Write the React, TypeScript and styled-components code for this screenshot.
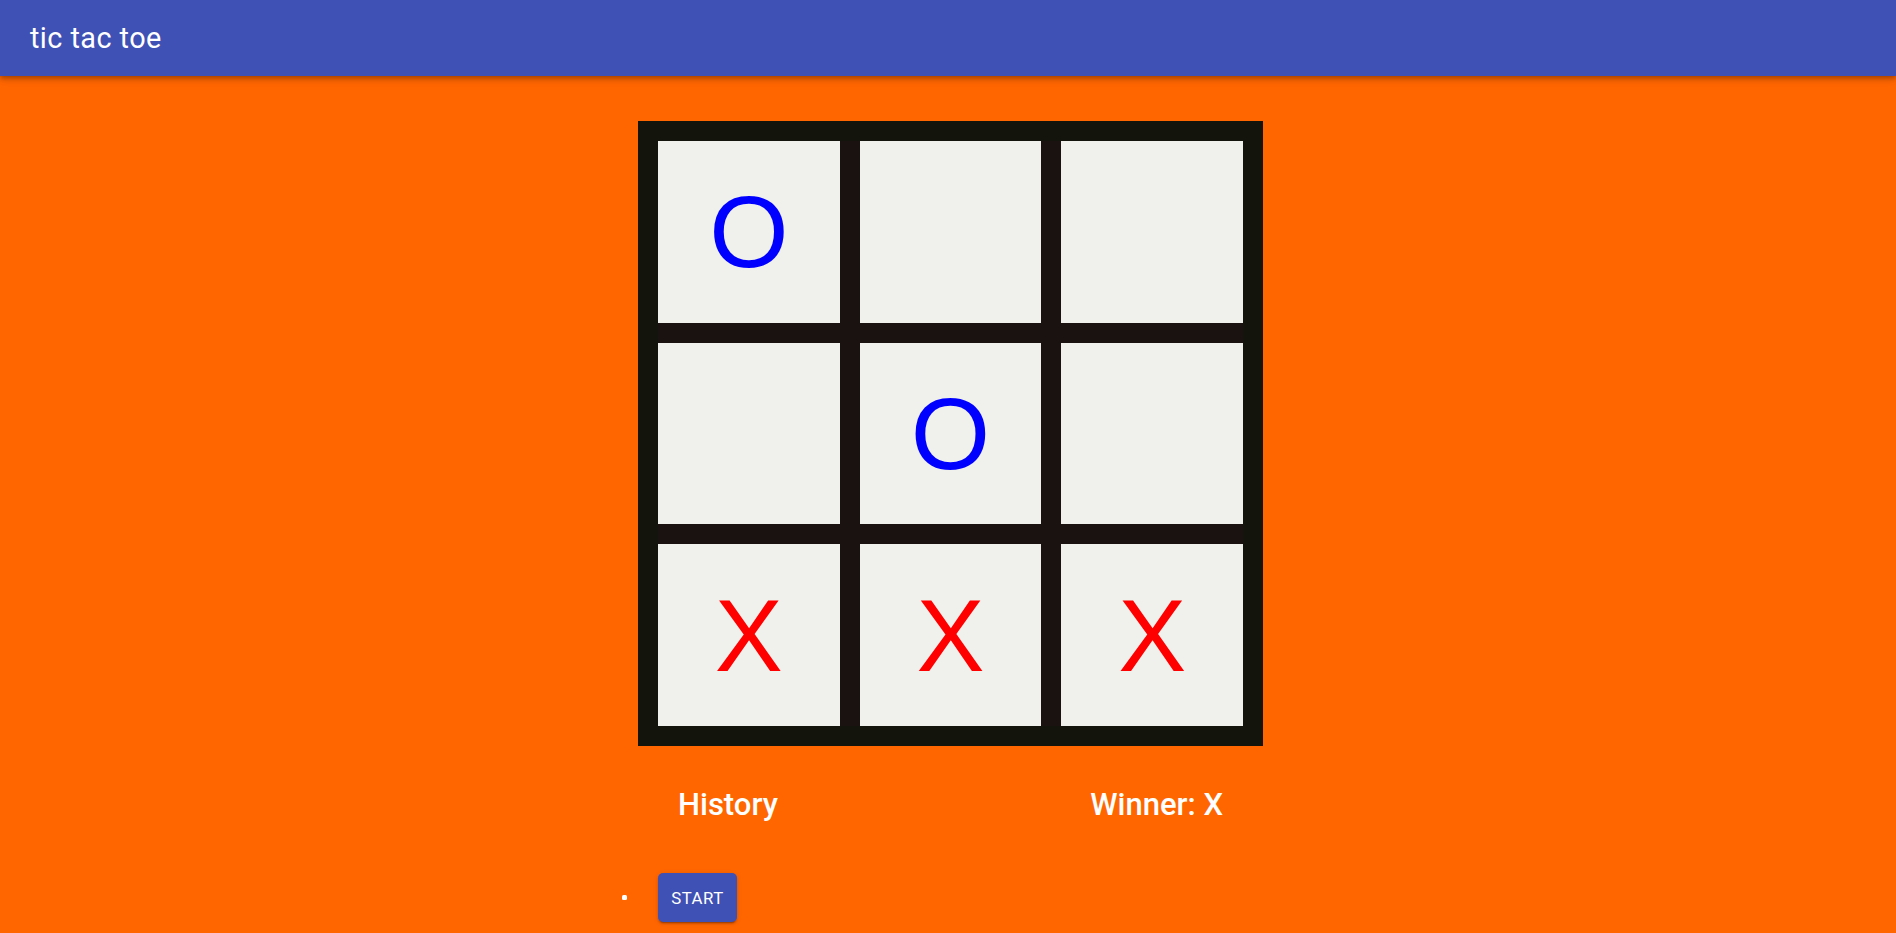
import React from "react";
import styled, { createGlobalStyle } from "styled-components";

const GlobalStyle = createGlobalStyle`
  html, body {
    margin: 0;
    padding: 0;
    background: #ff6600;
    font-family: Roboto, "Noto Sans", sans-serif;
    overflow: hidden;
  }
  * { box-sizing: border-box; }
`;

const Page = styled.div`
  min-height: 933px;
  background: #ff6600;
  display: flex;
  flex-direction: column;
`;

const AppBar = styled.header`
  height: 76px;
  background: #3f51b5;
  display: flex;
  align-items: center;
  padding-left: 30px;
  box-shadow: 0px 2px 4px -1px rgba(0, 0, 0, 0.2),
    0px 4px 5px 0px rgba(0, 0, 0, 0.14), 0px 1px 10px 0px rgba(0, 0, 0, 0.12);
  position: relative;
  z-index: 1;
`;

const Title = styled.h1`
  margin: 0;
  color: #ffffff;
  font-family: Roboto, sans-serif;
  font-size: 28.8px;
  font-weight: 400;
  letter-spacing: 0.45px;
  line-height: 1.6;
`;

const Main = styled.main`
  display: flex;
  flex-direction: column;
  align-items: flex-start;
  padding-left: 638px;
  padding-top: 45px;
`;

const Board = styled.div`
  width: 625px;
  height: 625px;
  border: 20px solid #13140c;
  background: #1a1210;
  display: grid;
  grid-template-columns: repeat(3, 1fr);
  grid-template-rows: repeat(3, 1fr);
  gap: 20px;
`;

const Cell = styled.div<{ $mark: string }>`
  background: #f0f1ed;
  display: flex;
  align-items: center;
  justify-content: center;
  font-family: "Liberation Sans", Arial, sans-serif;
  font-size: 102px;
  line-height: 1;
  color: ${(p) => (p.$mark === "X" ? "#ff0000" : "#0000ff")};
  padding-top: 1px;
`;

const InfoRow = styled.div`
  width: 625px;
  display: flex;
  justify-content: space-between;
  padding: 0 40px;
  margin-top: 38px;
`;

const InfoText = styled.h2`
  margin: 0;
  color: #ffffff;
  font-family: Roboto, sans-serif;
  font-size: 31px;
  font-weight: 500;
  line-height: 41px;
`;

const MoveList = styled.ul`
  list-style: none;
  margin: 48px 0 0 0;
  padding: 0;
`;

const MoveItem = styled.li`
  display: flex;
  align-items: center;
  gap: 31px;
  margin-left: -16px;

  &::before {
    content: "";
    width: 5px;
    height: 5px;
    border-radius: 1.5px;
    background: #ffffff;
  }
`;

const StartButton = styled.button`
  height: 49px;
  min-width: 79px;
  padding: 0 13px;
  border: none;
  border-radius: 5px;
  background: #3f51b5;
  color: #ffffff;
  font-family: Roboto, sans-serif;
  font-size: 16.8px;
  font-weight: 400;
  letter-spacing: 0.48px;
  text-transform: uppercase;
  cursor: pointer;
  box-shadow: 0px 3px 1px -2px rgba(0, 0, 0, 0.2),
    0px 2px 2px 0px rgba(0, 0, 0, 0.14), 0px 1px 5px 0px rgba(0, 0, 0, 0.12);
`;

const squares = ["O", "", "", "", "O", "", "X", "X", "X"];

export default function App() {
  return (
    <Page>
      <GlobalStyle />
      <AppBar>
        <Title>tic tac toe</Title>
      </AppBar>
      <Main>
        <Board>
          {squares.map((s, i) => (
            <Cell key={i} $mark={s}>
              {s}
            </Cell>
          ))}
        </Board>
        <InfoRow>
          <InfoText>History</InfoText>
          <InfoText>Winner: X</InfoText>
        </InfoRow>
        <MoveList>
          <MoveItem>
            <StartButton>Start</StartButton>
          </MoveItem>
        </MoveList>
      </Main>
    </Page>
  );
}
